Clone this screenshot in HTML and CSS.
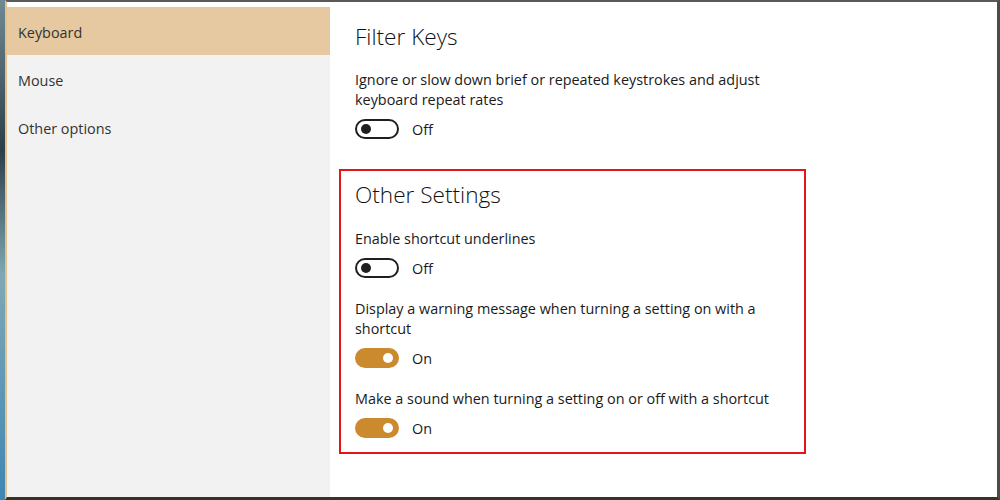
FILE: index.html
```html
<!DOCTYPE html>
<html lang="en">
<head>
    <meta charset="UTF-8">
    <meta name="viewport" content="width=device-width, initial-scale=1.0">
    <title>Ease of Access - Keyboard</title>
    <link rel="stylesheet" href="styles.css">
</head>
<body>
    <div class="desktop-strip"></div>
    <div class="window">
        <div class="nav">
            <div class="nav-item active">Keyboard</div>
            <div class="nav-item">Mouse</div>
            <div class="nav-item">Other options</div>
        </div>

        <div class="content">
            <div class="group">
                <h2>Filter Keys</h2>
                <p class="label">Ignore or slow down brief or repeated keystrokes and adjust<br>keyboard repeat rates</p>
                <div class="toggle-row">
                    <span class="toggle"></span>
                    <span class="state">Off</span>
                </div>
            </div>

            <div class="group highlight">
                <h2>Other Settings</h2>
                <div class="setting">
                    <p class="label">Enable shortcut underlines</p>
                    <div class="toggle-row">
                        <span class="toggle"></span>
                        <span class="state">Off</span>
                    </div>
                </div>
                <div class="setting">
                    <p class="label">Display a warning message when turning a setting on with a<br>shortcut</p>
                    <div class="toggle-row">
                        <span class="toggle on"></span>
                        <span class="state">On</span>
                    </div>
                </div>
                <div class="setting">
                    <p class="label">Make a sound when turning a setting on or off with a shortcut</p>
                    <div class="toggle-row">
                        <span class="toggle on"></span>
                        <span class="state">On</span>
                    </div>
                </div>
            </div>
        </div>
    </div>
</body>
</html>
```

FILE: styles.css
```css
body {
    font-family: "Open Sans", "Noto Sans", sans-serif;
    margin: 0;
    padding: 0;
    width: 1000px;
    height: 500px;
    display: flex;
    background-color: #3b3b3b;
    color: #1a1a1a;
    overflow: hidden;
}

.desktop-strip {
    width: 5px;
    height: 500px;
    background: linear-gradient(to bottom, #6f8a94 0%, #2d3e48 30%, #7fa8b4 55%, #3f86b4 100%);
}

.window {
    flex: 1;
    display: flex;
    height: 500px;
    box-sizing: border-box;
    background-color: #ffffff;
    border-left: 2px solid #e6c08c;
    border-top: 2px solid #5a5a5a;
    border-right: 3px solid #4a4a4a;
    border-bottom: 3px solid #3a3226;
    padding-top: 5px;
}

.nav {
    width: 323px;
    background-color: #f2f2f2;
}

.nav-item {
    height: 45px;
    line-height: 45px;
    padding: 3px 0 0 11px;
    font-size: 14.4px;
    color: #333333;
}

.nav-item.active {
    background-color: #e6c9a0;
}

.content {
    flex: 1;
    padding: 15px 0 0 25px;
}

h2 {
    font-size: 22.6px;
    font-weight: 300;
    line-height: 30px;
    margin: 0 0 18px 0;
    color: #111111;
}

.label {
    font-size: 14.4px;
    line-height: 20px;
    margin: 0 0 9px 0;
}

.group {
    margin-bottom: 30px;
}

.highlight {
    width: 467px;
    box-sizing: border-box;
    margin-left: -16px;
    padding: 9px 14px 14px 14px;
    border: 2px solid #e4141c;
}

.highlight h2 {
    margin-bottom: 19px;
}

.setting {
    margin-bottom: 21px;
}

.setting:last-child {
    margin-bottom: 0;
}

.toggle-row {
    display: flex;
    align-items: center;
    height: 20px;
}

.toggle {
    position: relative;
    width: 44px;
    height: 20px;
    box-sizing: border-box;
    border: 2px solid #1f1f1f;
    border-radius: 10px;
    background-color: #ffffff;
}

.toggle::after {
    content: "";
    position: absolute;
    top: 3px;
    left: 4px;
    width: 10px;
    height: 10px;
    border-radius: 50%;
    background-color: #1f1f1f;
}

.toggle.on {
    background-color: #cc8a2e;
    border-color: #cc8a2e;
}

.toggle.on::after {
    left: auto;
    right: 4px;
    background-color: #ffffff;
}

.state {
    margin-left: 13px;
    font-size: 14.4px;
    color: #1a1a1a;
}
```
